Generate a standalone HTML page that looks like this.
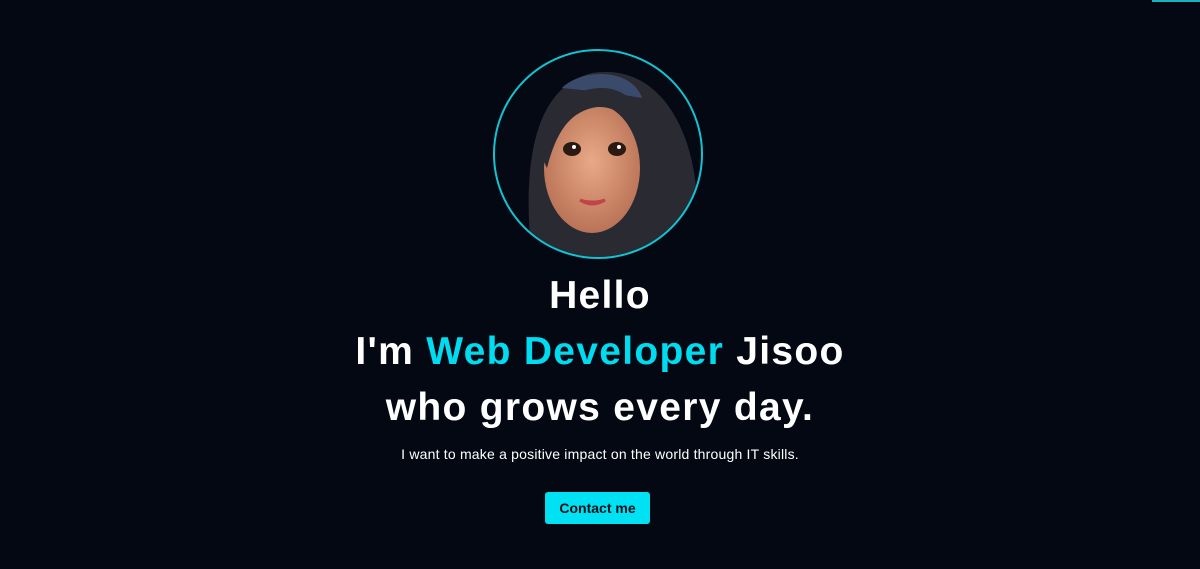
<!DOCTYPE html>
<html><head><style>
html,body{margin:0;padding:0;background:#030812;width:1200px;height:569px;overflow:hidden;font-family:"Liberation Sans",sans-serif;}
.topline{position:absolute;left:1152px;top:0;width:48px;height:2px;background:#16b3bf;}
.avatar{position:absolute;left:492px;top:48px;width:212px;height:212px;}
h1{position:absolute;left:0;width:1200px;top:268px;margin:0;text-align:center;color:#fff;font-size:39px;letter-spacing:1.3px;font-weight:bold;line-height:56px;}
.c{color:#00dcef;}
p{position:absolute;left:0;width:1200px;top:446px;margin:0;text-align:center;color:#fff;font-size:14px;letter-spacing:0.2px;}
.btn{position:absolute;left:545px;top:492px;width:105px;height:32px;background:#00e1f3;border-radius:3px;color:#061018;font-weight:bold;font-size:14px;line-height:32px;text-align:center;}
</style></head><body>
<div class="topline"></div>
<svg class="avatar" viewBox="0 0 212 212">
<defs><clipPath id="cp"><circle cx="106" cy="106" r="104"/></clipPath>
<radialGradient id="sk" cx="50%" cy="45%" r="60%"><stop offset="0" stop-color="#e9a987"/><stop offset="1" stop-color="#b56e52"/></radialGradient></defs>
<circle cx="106" cy="106" r="104" fill="#040913"/>
<g clip-path="url(#cp)">
<path d="M40 212 C30 120 40 40 100 25 C160 15 200 70 205 150 L212 212 Z" fill="#2a2a33"/>
<path d="M70 40 C90 20 140 20 150 50 L120 45 Z" fill="#3a4a6a"/>
<ellipse cx="100" cy="120" rx="48" ry="65" fill="url(#sk)"/>
<path d="M50 110 C55 60 80 40 110 40 C140 40 160 70 158 110 L150 90 C140 70 120 55 100 60 C80 65 65 80 55 120 Z" fill="#2a2a33"/>
<ellipse cx="80" cy="101" rx="9" ry="7" fill="#2b1a14"/>
<ellipse cx="125" cy="101" rx="9" ry="7" fill="#2b1a14"/>
<circle cx="82" cy="99" r="2" fill="#fff"/><circle cx="127" cy="99" r="2" fill="#fff"/>
<path d="M88 152 Q100 160 113 152 Q100 156 88 152" fill="#c0444a" stroke="#c0444a" stroke-width="3"/>
</g>
<circle cx="106" cy="106" r="104" fill="none" stroke="#12c3d2" stroke-width="2"/>
</svg>
<h1>Hello<br>I'm <span class="c">Web Developer</span> Jisoo<br>who grows every day.</h1>
<p>I want to make a positive impact on the world through IT skills.</p>
<div class="btn">Contact me</div>
</body></html>
